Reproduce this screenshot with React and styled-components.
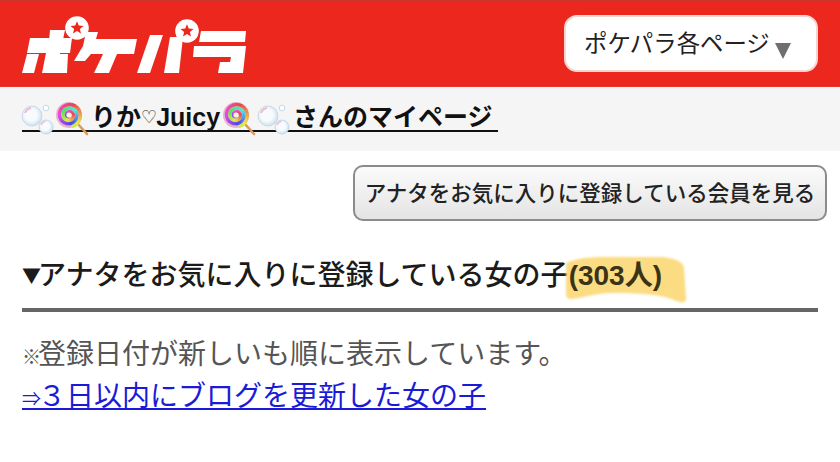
import React from "react";
import styled, { createGlobalStyle } from "styled-components";

const Global = createGlobalStyle`
  html, body { margin: 0; padding: 0; background: #fff; }
  body { font-family: "Liberation Sans", "Noto Sans CJK JP", sans-serif; overflow: hidden; }
`;

const Page = styled.div`
  width: 840px;
  height: 462px;
  overflow: hidden;
`;

const Header = styled.header`
  height: 87px;
  box-sizing: border-box;
  background: #ec271d;
  border-top: 1px solid #c9372c;
  border-bottom: 1px solid #e8362a;
  display: flex;
  align-items: flex-start;
  justify-content: space-between;
  padding: 14px 22px 0 20px;
`;

const Logo = styled.svg`
  display: block;
  width: 230px;
  height: 62px;
`;

const Select = styled.div`
  width: 254px;
  height: 57px;
  box-sizing: border-box;
  background: #fff;
  border: 2px solid #f6d5d0;
  border-radius: 13px;
  display: flex;
  align-items: center;
  padding: 0 0 3px 18px;
  font-size: 23.4px;
  color: #222;
  font-family: "Noto Sans CJK JP", sans-serif;
  font-weight: 400;
`;

const SelectArrow = styled.span`
  margin: 18px 0 0 5px;
  width: 0;
  height: 0;
  border-left: 8px solid transparent;
  border-right: 8px solid transparent;
  border-top: 16px solid #6f6f6f;
`;

const NameBar = styled.div`
  height: 64px;
  background: #f5f5f5;
  padding: 16px 22px 0;
  box-sizing: border-box;
`;

const NameLink = styled.a`
  display: inline-flex;
  align-items: flex-end;
  height: 27px;
  border-bottom: 2px solid #111;
  font-size: 25px;
  line-height: 26px;
  font-weight: 700;
  color: #111;
  padding-right: 5px;
`;

const Emoji = styled.svg`
  display: block;
  flex: none;
  align-self: flex-start;
  width: ${(p) => p.$w}px;
  height: 32px;
  margin: ${(p) => p.$top}px ${(p) => p.$right || 0}px 0 ${(p) => p.$left || 0}px;
  overflow: visible;
`;

const Heart = styled.span`
  font-size: 18px;
  letter-spacing: -1px;
  font-weight: 400;
  color: #222;
  font-family: "DejaVu Sans", sans-serif;
`;

const ButtonRow = styled.div`
  display: flex;
  justify-content: flex-end;
  padding: 14px 13px 0;
`;

const Button = styled.button`
  width: 474px;
  height: 56px;
  box-sizing: border-box;
  border: 2px solid #8b8b8b;
  border-radius: 10px;
  background: linear-gradient(#fbfbfb, #e4e4e4);
  font-family: "Noto Sans CJK JP", sans-serif;
  font-size: 21.5px;
  font-weight: 500;
  color: #222;
  padding: 0 0 4px;
  white-space: nowrap;
`;

const Section = styled.section`
  padding: 35px 22px 0;
`;

const Heading = styled.h2`
  margin: 0;
  height: 40px;
  line-height: 40px;
  padding-bottom: 12px;
  border-bottom: 4px solid #666;
  font-size: 28px;
  font-weight: 500;
  color: #1b1b1b;
  white-space: nowrap;
  font-family: "Liberation Sans", "Noto Sans CJK JP", sans-serif;
`;

const HeadingMark = styled.span`
  font-size: 19px;
  letter-spacing: -3px;
  font-family: "Noto Sans CJK JP", sans-serif;
  position: relative;
  top: -2px;
`;

const SmallMark = styled.span`
  font-size: 19px;
  letter-spacing: -3px;
  line-height: 1;
`;

const Count = styled.span`
  position: relative;
  z-index: 0;
  font-weight: 700;
  font-size: 28px;
  color: #3a3316;
`;

const Blob = styled.svg`
  position: absolute;
  left: -5px;
  top: -3px;
  width: 124px;
  height: 47px;
  z-index: -1;
  overflow: visible;
  filter: blur(0.8px);
`;

const Notes = styled.div`
  margin-top: 18px;
  font-size: 28px;
  line-height: 44px;
  font-family: "Noto Sans CJK JP", sans-serif;
  font-weight: 400;
  white-space: nowrap;
`;

const Note = styled.div`
  color: #555;
`;

const BlogLink = styled.a`
  display: block;
  width: max-content;
  margin-top: -2px;
  color: #1a1ad8;
  text-decoration: underline;
  text-underline-offset: 2px;
  text-decoration-thickness: 2px;
`;

const Bubble = ({ id, cx, cy, r }) => (
  <g>
    <circle cx={cx} cy={cy} r={r} fill={`url(#${id})`} stroke="#bcd6e6" strokeWidth="0.8" />
    <path
      d={`M${cx - r * 0.7} ${cy - r * 0.3}A${r * 0.8} ${r * 0.8} 0 0 1 ${cx - r * 0.1} ${cy - r * 0.8}`}
      fill="none"
      stroke="#f2b9d0"
      strokeWidth={r * 0.2}
    />
  </g>
);

const Bubbles = ({ id, ...rest }) => (
  <Emoji viewBox="0 0 34 32" $w={34} {...rest}>
    <defs>
      <radialGradient id={id} cx="0.45" cy="0.45" r="0.6">
        <stop offset="0.5" stopColor="#f8fbfd" />
        <stop offset="1" stopColor="#c3dcec" />
      </radialGradient>
    </defs>
    <Bubble id={id} cx={10} cy={11} r={10} />
    <circle cx={24} cy={3} r={2.8} fill="#fff" stroke="#bcd6e0" strokeWidth="0.9" />
    <Bubble id={id} cx={24} cy={22} r={7} />
  </Emoji>
);

const SWIRL = Array.from({ length: 70 }, (_, i) => {
  const a0 = (i / 70) * Math.PI * 6.4;
  const a1 = ((i + 1.3) / 70) * Math.PI * 6.4;
  const r0 = 1 + (i / 70) * 11.2;
  const r1 = 1 + ((i + 1.3) / 70) * 11.2;
  const hue = (i * 9 + 170) % 360;
  return {
    d: `M${13 + r0 * Math.cos(a0)} ${13 + r0 * Math.sin(a0)}L${13 + r1 * Math.cos(a1)} ${13 + r1 * Math.sin(a1)}`,
    color: `hsl(${hue} 78% 60%)`,
  };
});

const Lollipop = (props) => (
  <Emoji viewBox="0 0 32 32" $w={32} {...props}>
    <line x1="21" y1="21" x2="31" y2="32" stroke="#d99a5c" strokeWidth="2.6" strokeLinecap="round" />
    <circle cx="13" cy="13" r="13" fill="#e8b4cc" />
    {SWIRL.map((s, i) => (
      <path key={i} d={s.d} stroke={s.color} strokeWidth="3.1" fill="none" />
    ))}
    <circle cx="13" cy="13" r="2.6" fill="#f4f6d0" />
  </Emoji>
);

const Star = ({ cx, cy }) => {
  const pts = Array.from({ length: 10 }, (_, i) => {
    const r = i % 2 ? 3 : 6.8;
    const a = -Math.PI / 2 + (i * Math.PI) / 5;
    return `${cx + r * Math.cos(a)},${cy + r * Math.sin(a)}`;
  }).join(" ");
  return (
    <g>
      <circle cx={cx} cy={cy} r="11.8" fill="#fff" />
      <polygon points={pts} fill="#ec271d" />
    </g>
  );
};

const PokeparaLogo = () => (
  <Logo viewBox="20 14 230 62" role="img" aria-label="ポケパラ">
    <g fill="#fff">
      <polygon points="30,37 72,37 70,52 27,52" />
      <polygon points="50,29 65,29 56,72 42,72 46,52 48,52" />
      <polygon points="27,53 39,53 34,72 22,72" />
      <polygon points="56,53 68,53 67,72 54,72" />
      <polygon points="86,31 98,31 96,38 137,38 134,53 117,53 109,72 94,72 103,53 91,53 85,60 74,60 83,45" />
      <polygon points="150,34 163,34 150,72 137,72" />
      <polygon points="170,36 183,36 179,72 164,72" />
      <polygon points="201,30 246,30 245,41 199,41" />
      <polygon points="194,45 246,45 243,72 218,72 220,61 230,61 231,56 193,56" />
    </g>
    <Star cx={77} cy={27} />
    <Star cx={187} cy={30} />
  </Logo>
);

export default function App() {
  return (
    <Page>
      <Global />
      <Header>
        <PokeparaLogo />
        <Select>
          ポケパラ各ページ
          <SelectArrow />
        </Select>
      </Header>
      <NameBar>
        <NameLink>
          <Bubbles id="b1" $top={2} />
          <Lollipop $top={-1} $right={3} />
          りか<Heart>♡</Heart>Juicy
          <Lollipop $top={-1} $left={3} />
          <Bubbles id="b2" $top={2} $left={3} $right={1} />
          さんのマイページ
        </NameLink>
      </NameBar>
      <ButtonRow>
        <Button>アナタをお気に入りに登録している会員を見る</Button>
      </ButtonRow>
      <Section>
        <Heading>
          <HeadingMark>▼</HeadingMark>アナタをお気に入りに登録している女の子
          <Count>
            <Blob viewBox="0 0 124 47">
              <path
                d="M2 6C12 2 20 0 40 0L98 0C110 1 118 4 120 10L122 42C122 46 118 46 112 44C100 37 70 36 50 36C30 36 18 41 8 42C3 42 2 40 2 36Z"
                fill="#fbdc82"
              />
            </Blob>
            (303人)
          </Count>
        </Heading>
        <Notes>
          <Note>
            <SmallMark>※</SmallMark>登録日付が新しいも順に表示しています。
          </Note>
          <BlogLink>
            <SmallMark>⇒</SmallMark>３日以内にブログを更新した女の子
          </BlogLink>
        </Notes>
      </Section>
    </Page>
  );
}
